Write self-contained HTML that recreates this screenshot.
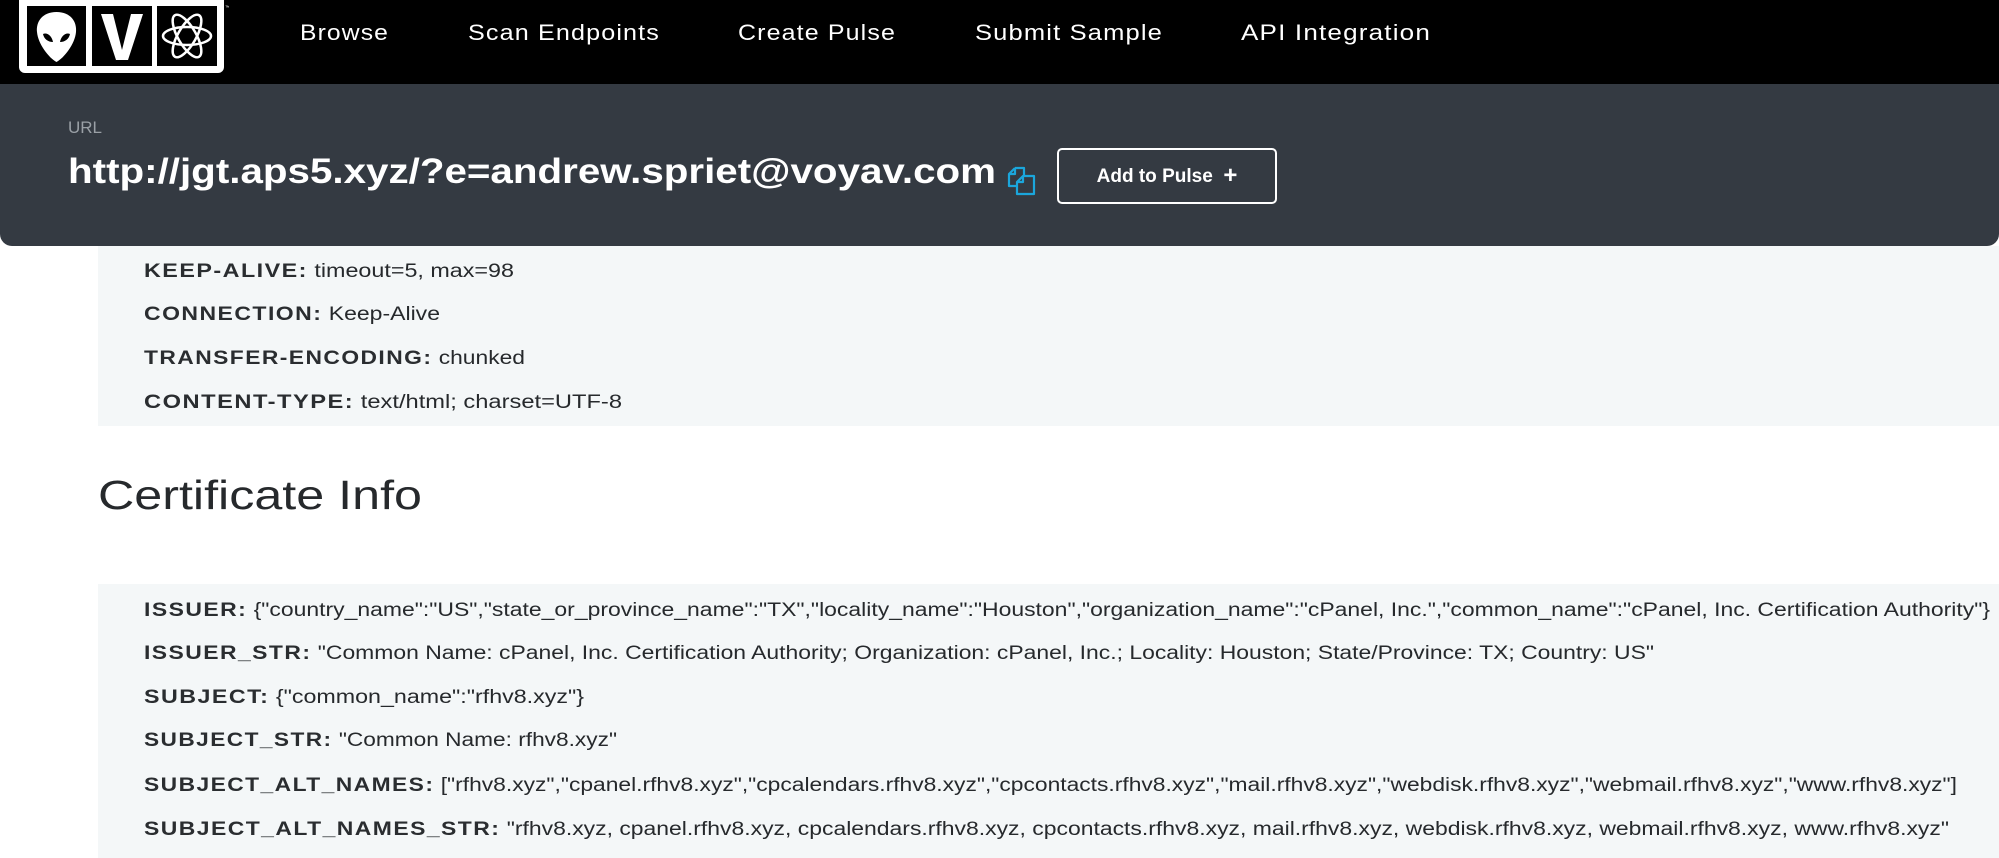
<!DOCTYPE html>
<html><head><meta charset="utf-8">
<style>
*{margin:0;padding:0;box-sizing:border-box}
html,body{width:1999px;height:858px;overflow:hidden;background:#fff;font-family:"Liberation Sans",Arial,sans-serif;color:#26292c}
.nav{position:absolute;left:0;top:0;width:1999px;height:84px;background:#000}
.nav .it{position:absolute;top:20px;color:#fff;font-size:22px;letter-spacing:1px;white-space:nowrap}
.hdr{position:absolute;left:0;top:84px;width:1999px;height:162px;background:#343a42;border-radius:0 0 12px 12px}
.fit{position:absolute;white-space:nowrap;transform-origin:0 50%;display:inline-block}
.gray{position:absolute;left:98px;right:0;background:#f4f7f8}
.row{position:absolute;left:144px;font-size:19px;white-space:nowrap;transform-origin:0 50%}
.row b{letter-spacing:1.2px;font-weight:bold;color:#2a2d30}
</style></head><body>
<div class="nav">
  <svg style="position:absolute;left:19px;top:0" width="210" height="74" viewBox="0 0 210 74">
    <rect x="0" y="-6" width="205" height="79" rx="6" fill="#fff"/>
    <rect x="8" y="6" width="59" height="60" fill="#000"/>
    <rect x="73" y="6" width="60" height="60" fill="#000"/>
    <rect x="138" y="6" width="60" height="60" fill="#000"/>
    <path d="M37.5 12 C23 12 17 22 18 32 C19 44 30 58 37.5 62 C45 58 56 44 57 32 C58 22 52 12 37.5 12Z" fill="#fff"/>
    <path d="M24 34 C28 32 33 36 34 42 C29 42 25 39 24 34Z M51 34 C47 32 42 36 41 42 C46 42 50 39 51 34Z" fill="#000"/>
    <path d="M82 14 H94 L103 50 L112 14 H124 L109 60 H97Z" fill="#fff"/>
    <g fill="none" stroke="#fff" stroke-width="2.5">
      <ellipse cx="168" cy="36" rx="24" ry="9" transform="rotate(60 168 36)"/>
      <ellipse cx="168" cy="36" rx="24" ry="9" transform="rotate(-60 168 36)"/>
      <ellipse cx="168" cy="36" rx="24" ry="9"/>
    </g>
    <text x="206" y="9" fill="#fff" font-size="5">™</text>
  </svg>
  <span class="it fit" style="left:300px">Browse</span>
  <span class="it fit" style="left:468px">Scan Endpoints</span>
  <span class="it fit" style="left:738px">Create Pulse</span>
  <span class="it fit" style="left:975px">Submit Sample</span>
  <span class="it fit" style="left:1241px">API Integration</span>
</div>
<div class="hdr">
  <div style="position:absolute;left:68px;top:34px;color:#9aa0a6;font-size:17px">URL</div>
  <div class="fit" style="left:68px;top:68px;color:#fff;font-weight:bold;font-size:35px">http://jgt.aps5.xyz/?e=andrew.spriet@voyav.com</div>
  <svg style="position:absolute;left:1007px;top:82px" width="32" height="30" viewBox="0 0 32 30" fill="none" stroke="#1ba6dc" stroke-width="2.2" stroke-linejoin="round">
    <path d="M8 2 H17 V10 M8 2 L2 8 V20 H10"/>
    <path d="M2 8 H8 V2"/>
    <path d="M16 10 H27 V28 H10 V16 Z"/>
    <path d="M10 16 H16 V10"/>
  </svg>
  <div style="position:absolute;left:1057px;top:64px;width:220px;height:56px;border:2px solid #fff;border-radius:5px;color:#fff;font-weight:bold;font-size:19px;text-align:center;line-height:52px">Add to Pulse&nbsp; <span style="font-size:24px;vertical-align:-1px">+</span></div>
</div>
<div class="gray" style="top:246px;height:180px"></div>
<div class="row fit" style="top:261px"><b>KEEP-ALIVE:</b> timeout=5, max=98</div>
<div class="row fit" style="top:304px"><b>CONNECTION:</b> Keep-Alive</div>
<div class="row fit" style="top:348px"><b>TRANSFER-ENCODING:</b> chunked</div>
<div class="row fit" style="top:392px"><b>CONTENT-TYPE:</b> text/html; charset=UTF-8</div>
<div class="fit" style="left:98px;top:472px;font-size:41px;color:#26292c">Certificate Info</div>
<div class="gray" style="top:584px;height:274px"></div>
<div class="row fit" style="top:600px"><b>ISSUER:</b> {"country_name":"US","state_or_province_name":"TX","locality_name":"Houston","organization_name":"cPanel, Inc.","common_name":"cPanel, Inc. Certification Authority"}</div>
<div class="row fit" style="top:643px"><b>ISSUER_STR:</b> "Common Name: cPanel, Inc. Certification Authority; Organization: cPanel, Inc.; Locality: Houston; State/Province: TX; Country: US"</div>
<div class="row fit" style="top:687px"><b>SUBJECT:</b> {"common_name":"rfhv8.xyz"}</div>
<div class="row fit" style="top:730px"><b>SUBJECT_STR:</b> "Common Name: rfhv8.xyz"</div>
<div class="row fit" style="top:775px"><b>SUBJECT_ALT_NAMES:</b> ["rfhv8.xyz","cpanel.rfhv8.xyz","cpcalendars.rfhv8.xyz","cpcontacts.rfhv8.xyz","mail.rfhv8.xyz","webdisk.rfhv8.xyz","webmail.rfhv8.xyz","www.rfhv8.xyz"]</div>
<div class="row fit" style="top:819px"><b>SUBJECT_ALT_NAMES_STR:</b> "rfhv8.xyz, cpanel.rfhv8.xyz, cpcalendars.rfhv8.xyz, cpcontacts.rfhv8.xyz, mail.rfhv8.xyz, webdisk.rfhv8.xyz, webmail.rfhv8.xyz, www.rfhv8.xyz"</div>
<script>
var els=document.querySelectorAll('.fit');
var targets=[89,192,158,188,190,928,370,296,381,478,324,1846,1510,440,473,1813,1805];
for(var i=0;i<els.length&&i<targets.length;i++){
  var cw=els[i].getBoundingClientRect().width;
  if(cw>0)els[i].style.transform='scaleX('+(targets[i]/cw)+')';
}
</script>
</body></html>
